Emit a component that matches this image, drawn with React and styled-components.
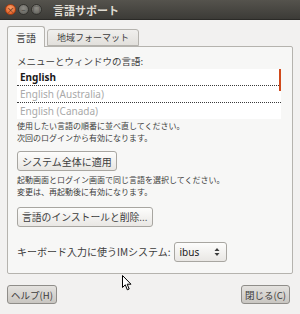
import styled, { createGlobalStyle } from "styled-components";

const GlobalStyle = createGlobalStyle`
  html, body {
    margin: 0;
    padding: 0;
    background: #f2f1f0;
  }
  body {
    font-family: "Noto Sans CJK JP", "Noto Sans", sans-serif;
    color: #3c3c3c;
  }
`;

const Window = styled.div`
  position: relative;
  width: 300px;
  height: 314px;
  display: flex;
  flex-direction: column;
  background: #f2f1f0;
  overflow: hidden;
`;

const TitleBar = styled.div`
  height: 20px;
  display: flex;
  align-items: center;
  padding-left: 5px;
  background: linear-gradient(#55534d, #3c3b37);
  border-bottom: 1px solid #2b2a27;
  box-sizing: border-box;
`;

const Circle = styled.span`
  width: 11px;
  height: 11px;
  border-radius: 50%;
  margin-right: 2px;
  box-sizing: border-box;
  display: flex;
  align-items: center;
  justify-content: center;
  font-size: 8px;
  line-height: 1;
  color: ${(p) => (p.$close ? "#5a2a10" : "#3c3b37")};
  background: ${(p) =>
    p.$close
      ? "radial-gradient(circle at 50% 35%, #f6a06a, #e0531a)"
      : "radial-gradient(circle at 50% 35%, #8e8c86, #5c5b56)"};
  border: 1px solid ${(p) => (p.$close ? "#a83d10" : "#33322e")};
`;

const Title = styled.span`
  margin-left: 9px;
  color: #dfdbd2;
  font-weight: bold;
  font-size: 11px;
`;

const Content = styled.div`
  flex: 1;
  display: flex;
  flex-direction: column;
  padding: 6px 7px 0 7px;
`;

const Tabs = styled.div`
  display: flex;
  align-items: flex-end;
  height: 20px;
  position: relative;
  z-index: 1;
`;

const Tab = styled.div`
  box-sizing: border-box;
  height: ${(p) => (p.$active ? "21px" : "17px")};
  padding: 0 ${(p) => (p.$active ? "8px" : "9px")};
  margin-right: 2px;
  display: flex;
  align-items: center;
  font-size: ${(p) => (p.$active ? "10px" : "9px")};
  color: #3c3c3c;
  border: 1px solid #b5b3ae;
  border-bottom: ${(p) => (p.$active ? "none" : "1px solid #b5b3ae")};
  border-radius: 3px 3px 0 0;
  background: ${(p) =>
    p.$active ? "#f7f7f6" : "linear-gradient(#f0efed, #e2e0dc)"};
  margin-bottom: ${(p) => (p.$active ? "-1px" : "0")};
`;

const Panel = styled.div`
  box-sizing: border-box;
  width: 286px;
  height: 228px;
  border: 1px solid #b5b3ae;
  border-radius: 0 2px 2px 2px;
  background: #f7f7f6;
  padding: 8px 9px 0 9px;
  display: flex;
  flex-direction: column;
`;

const Label = styled.div`
  font-size: ${(p) => p.$fs || 10}px;
  line-height: 12px;
  color: #3c3c3c;
  white-space: nowrap;
`;

const Small = styled.div`
  font-size: 8px;
  line-height: 12px;
  color: #3c3c3c;
  margin-top: ${(p) => p.$mt || 0}px;
`;

const List = styled.div`
  margin-top: 2px;
  width: 264px;
  background: #ffffff;
  position: relative;
  display: flex;
  flex-direction: column;
`;

const Row = styled.div`
  height: ${(p) => p.$h}px;
  box-sizing: border-box;
  display: flex;
  align-items: center;
  padding-left: 3px;
  font-family: "Noto Sans", "DejaVu Sans", sans-serif;
  font-size: 10px;
  font-weight: ${(p) => (p.$selected ? "bold" : "normal")};
  color: ${(p) => (p.$selected ? "#1a1a1a" : "#a9a9a9")};
  border-bottom: ${(p) => (p.$sep ? "1px dotted #3a3a3a" : "none")};
`;

const FocusBar = styled.span`
  position: absolute;
  right: 0;
  top: 0;
  width: 2px;
  height: 22px;
  background: #d04a1c;
`;

const Button = styled.button`
  box-sizing: border-box;
  align-self: flex-start;
  height: 20px;
  padding: 0 4px;
  margin-top: ${(p) => p.$mt || 0}px;
  font-family: "Noto Sans CJK JP", "Noto Sans", sans-serif;
  font-size: ${(p) => p.$fs || 10}px;
  color: #3c3c3c;
  border: 1px solid #a8a6a1;
  border-radius: 3px;
  background: linear-gradient(#fdfdfc, #e9e7e4);
  display: flex;
  align-items: center;
`;

const ComboRow = styled.div`
  display: flex;
  align-items: center;
  margin-top: 15px;
  gap: 3px;
`;

const Combo = styled.div`
  box-sizing: border-box;
  width: 53px;
  height: 20px;
  border: 1px solid #a8a6a1;
  border-radius: 3px;
  background: linear-gradient(#fdfdfc, #e9e7e4);
  display: flex;
  align-items: center;
  justify-content: space-between;
  padding: 0 6px 0 5px;
  font-family: "Noto Sans", "DejaVu Sans", sans-serif;
  font-size: 10px;
  color: #1a1a1a;
`;

const Footer = styled.div`
  display: flex;
  justify-content: space-between;
  margin-top: 11px;
  padding-right: 3px;
`;

const FooterButton = styled.button`
  box-sizing: border-box;
  height: 19px;
  padding: 0 3px;
  font-family: "Noto Sans CJK JP", "Noto Sans", sans-serif;
  font-size: 9.5px;
  color: #3c3c3c;
  border: 1px solid #8f8d89;
  border-radius: 3px;
  background: linear-gradient(#e4e2df, #c9c6c1);
  display: flex;
  align-items: center;
`;

const Cursor = styled.svg`
  position: absolute;
  left: 122px;
  top: 275px;
`;

export default function App() {
  return (
    <Window>
      <GlobalStyle />
      <TitleBar>
        <Circle $close>×</Circle>
        <Circle>–</Circle>
        <Circle>□</Circle>
        <Title>言語サポート</Title>
      </TitleBar>
      <Content>
        <Tabs>
          <Tab $active>言語</Tab>
          <Tab>地域フォーマット</Tab>
        </Tabs>
        <Panel>
          <Label $fs={9.5}>メニューとウィンドウの言語:</Label>
          <List>
            <Row $h={17} $sep $selected>English</Row>
            <Row $h={17} $sep>English (Australia)</Row>
            <Row $h={16}>English (Canada)</Row>
            <FocusBar />
          </List>
          <Small $mt={1}>使用したい言語の順番に並べ直してください。</Small>
          <Small>次回のログインから有効になります。</Small>
          <Button $mt={7}>システム全体に適用</Button>
          <Small $mt={3}>起動画面とログイン画面で同じ言語を選択してください。</Small>
          <Small>変更は、再起動後に有効になります。</Small>
          <Button $mt={9} $fs={9.8}>言語のインストールと削除...</Button>
          <ComboRow>
            <Label>キーボード入力に使うIMシステム:</Label>
            <Combo>
              <span>ibus</span>
              <svg width="6" height="10" viewBox="0 0 6 10">
                <path d="M3 1 L5.5 4 H0.5 Z M3 9 L5.5 6 H0.5 Z" fill="#3c3c3c" />
              </svg>
            </Combo>
          </ComboRow>
        </Panel>
        <Footer>
          <FooterButton>ヘルプ(H)</FooterButton>
          <FooterButton>閉じる(C)</FooterButton>
        </Footer>
      </Content>
      <Cursor width="10" height="16" viewBox="0 0 10 16">
        <path
          d="M0.5 0.5 L0.5 12.5 L3.3 9.8 L5.3 14.8 L7.2 14 L5.2 9.2 L9 9.2 Z"
          fill="#ffffff"
          stroke="#000000"
          strokeWidth="1"
          strokeLinejoin="round"
        />
      </Cursor>
    </Window>
  );
}
